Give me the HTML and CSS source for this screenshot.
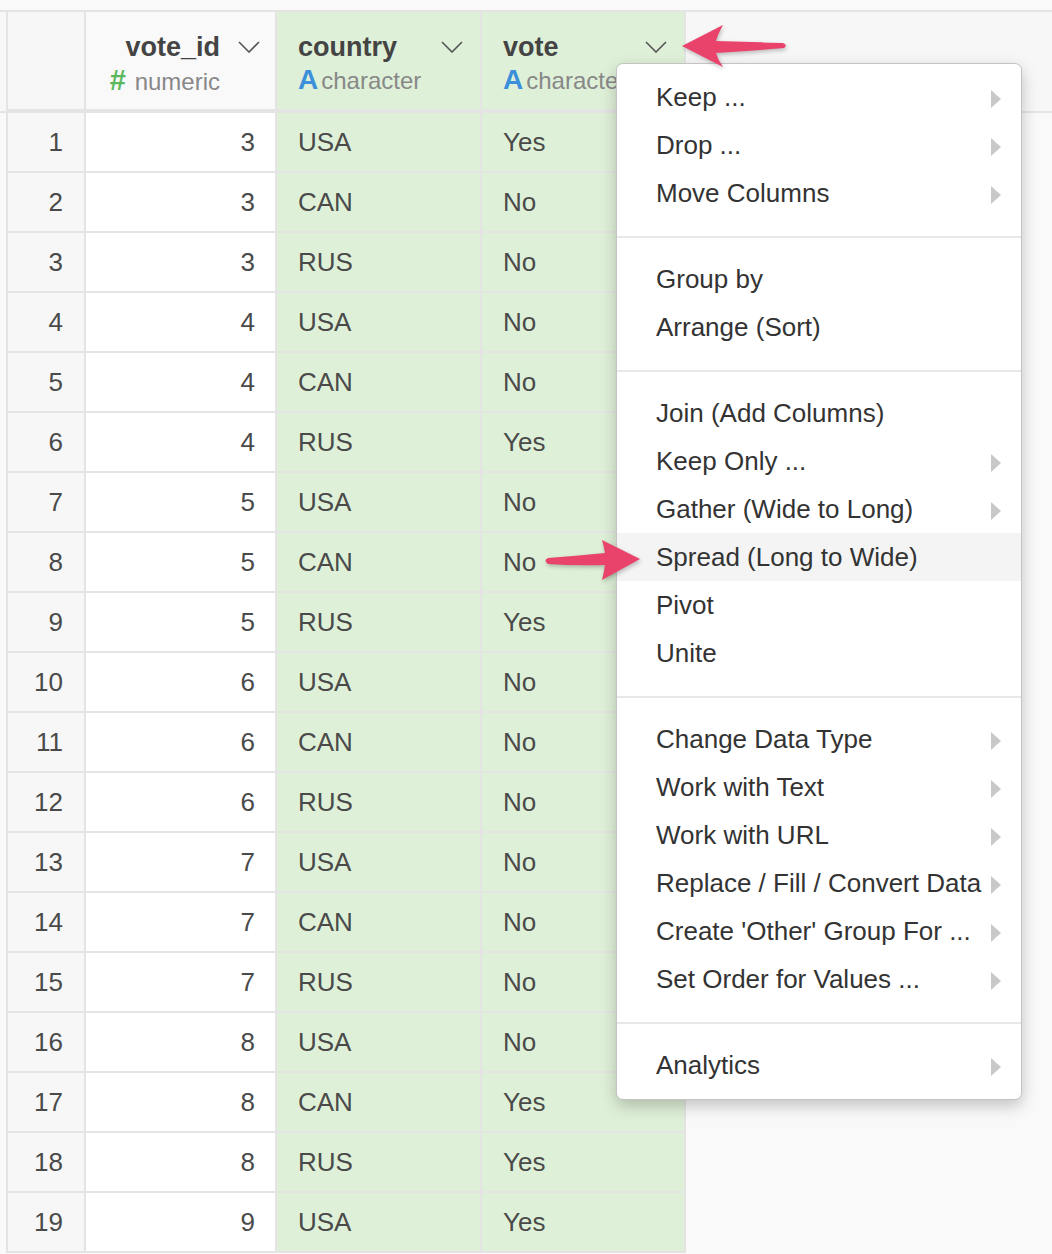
FILE: index.html
```html
<!DOCTYPE html>
<html>
<head>
<meta charset="utf-8">
<link rel="stylesheet" href="styles.css">
</head>
<body>
<div class="page">
  <div class="head">
    <div class="head-grid">
      <div class="hcell rn-head"></div>
      <div class="hcell num-head">
        <div class="hinfo right">
          <div class="hname">vote_id</div>
          <div class="htype"><span class="ico-num">#</span> numeric</div>
        </div>
        <svg class="chev" width="22" height="12" viewBox="0 0 22 12"><path d="M1 1 L11 11 L21 1" fill="none" stroke="#555" stroke-width="1.6"/></svg>
      </div>
      <div class="hcell chr-head">
        <div class="hinfo">
          <div class="hname">country</div>
          <div class="htype"><span class="ico-chr">A</span>character</div>
        </div>
        <svg class="chev" width="22" height="12" viewBox="0 0 22 12"><path d="M1 1 L11 11 L21 1" fill="none" stroke="#555" stroke-width="1.6"/></svg>
      </div>
      <div class="hcell chr-head">
        <div class="hinfo">
          <div class="hname">vote</div>
          <div class="htype"><span class="ico-chr">A</span>character</div>
        </div>
        <svg class="chev" width="22" height="12" viewBox="0 0 22 12"><path d="M1 1 L11 11 L21 1" fill="none" stroke="#555" stroke-width="1.6"/></svg>
      </div>
    </div>
    <div class="head-fill"></div>
  </div>

  <div class="body-grid">
    <div class="c rn">1</div><div class="c num">3</div><div class="c chr">USA</div><div class="c chr">Yes</div>
    <div class="c rn">2</div><div class="c num">3</div><div class="c chr">CAN</div><div class="c chr">No</div>
    <div class="c rn">3</div><div class="c num">3</div><div class="c chr">RUS</div><div class="c chr">No</div>
    <div class="c rn">4</div><div class="c num">4</div><div class="c chr">USA</div><div class="c chr">No</div>
    <div class="c rn">5</div><div class="c num">4</div><div class="c chr">CAN</div><div class="c chr">No</div>
    <div class="c rn">6</div><div class="c num">4</div><div class="c chr">RUS</div><div class="c chr">Yes</div>
    <div class="c rn">7</div><div class="c num">5</div><div class="c chr">USA</div><div class="c chr">No</div>
    <div class="c rn">8</div><div class="c num">5</div><div class="c chr">CAN</div><div class="c chr">No</div>
    <div class="c rn">9</div><div class="c num">5</div><div class="c chr">RUS</div><div class="c chr">Yes</div>
    <div class="c rn">10</div><div class="c num">6</div><div class="c chr">USA</div><div class="c chr">No</div>
    <div class="c rn">11</div><div class="c num">6</div><div class="c chr">CAN</div><div class="c chr">No</div>
    <div class="c rn">12</div><div class="c num">6</div><div class="c chr">RUS</div><div class="c chr">No</div>
    <div class="c rn">13</div><div class="c num">7</div><div class="c chr">USA</div><div class="c chr">No</div>
    <div class="c rn">14</div><div class="c num">7</div><div class="c chr">CAN</div><div class="c chr">No</div>
    <div class="c rn">15</div><div class="c num">7</div><div class="c chr">RUS</div><div class="c chr">No</div>
    <div class="c rn">16</div><div class="c num">8</div><div class="c chr">USA</div><div class="c chr">No</div>
    <div class="c rn">17</div><div class="c num">8</div><div class="c chr">CAN</div><div class="c chr">Yes</div>
    <div class="c rn">18</div><div class="c num">8</div><div class="c chr">RUS</div><div class="c chr">Yes</div>
    <div class="c rn">19</div><div class="c num">9</div><div class="c chr">USA</div><div class="c chr">Yes</div>
  </div>

  <div class="menu">
    <div class="grp">
      <div class="item"><span>Keep ...</span><i class="sub"></i></div>
      <div class="item"><span>Drop ...</span><i class="sub"></i></div>
      <div class="item"><span>Move Columns</span><i class="sub"></i></div>
    </div>
    <div class="sep"></div>
    <div class="grp">
      <div class="item"><span>Group by</span></div>
      <div class="item"><span>Arrange (Sort)</span></div>
    </div>
    <div class="sep"></div>
    <div class="grp">
      <div class="item"><span>Join (Add Columns)</span></div>
      <div class="item"><span>Keep Only ...</span><i class="sub"></i></div>
      <div class="item"><span>Gather (Wide to Long)</span><i class="sub"></i></div>
      <div class="item active"><span>Spread (Long to Wide)</span></div>
      <div class="item"><span>Pivot</span></div>
      <div class="item"><span>Unite</span></div>
    </div>
    <div class="sep"></div>
    <div class="grp">
      <div class="item"><span>Change Data Type</span><i class="sub"></i></div>
      <div class="item"><span>Work with Text</span><i class="sub"></i></div>
      <div class="item"><span>Work with URL</span><i class="sub"></i></div>
      <div class="item"><span>Replace / Fill / Convert Data</span><i class="sub"></i></div>
      <div class="item"><span>Create 'Other' Group For ...</span><i class="sub"></i></div>
      <div class="item"><span>Set Order for Values ...</span><i class="sub"></i></div>
    </div>
    <div class="sep"></div>
    <div class="grp">
      <div class="item"><span>Analytics</span><i class="sub"></i></div>
    </div>
  </div>

  <svg class="arrows" width="1052" height="1254" viewBox="0 0 1052 1254">
    <path d="M682,46 L723,25 Q718,34 716,41 Q750,42 783,43 Q788,45 784,48 Q750,51 716,53 Q718,60 723,67 Z" fill="#ea436b"/>
    <path d="M640,559 L602,540 Q604,547 605,553 Q575,556 548,558 Q543,560 548,564 Q575,566 605,565 Q604,572 602,580 Z" fill="#ea436b"/>
  </svg>
</div>
</body>
</html>
```

FILE: styles.css
```css
html, body {
  margin: 0;
  padding: 0;
  overflow: hidden;
  background: #f9f9f9;
}
.page {
  position: relative;
  width: 1052px;
  height: 1254px;
  padding-top: 10px;
  box-sizing: border-box;
  font-family: "Liberation Sans", Arial, sans-serif;
  color: #444;
}
.head {
  display: flex;
  border-top: 2px solid #e4e4e4;
  border-bottom: 2px solid #e4e4e4;
  background: #f7f7f7;
}
.head-grid {
  display: grid;
  grid-template-columns: 76px 189px 203px 202px;
  column-gap: 2px;
  background: #e4e4e4;
  padding: 0 2px 2px 2px;
  margin-left: 6px;
}
.head-fill {
  flex: 1;
  background: #f7f7f7;
}
.hcell {
  height: 97px;
  box-sizing: border-box;
  display: flex;
  align-items: flex-start;
}
.rn-head { background: #f7f7f7; }
.num-head {
  background: #f9f9f9;
  justify-content: flex-end;
  padding: 19px 15px 0 0;
}
.chr-head {
  background: #dff0d8;
  justify-content: space-between;
  padding: 19px 17px 0 21px;
}
.num-head .chev { margin-left: 18px; }
.hinfo { display: flex; flex-direction: column; }
.hinfo.right { align-items: flex-end; }
.hname {
  font-weight: bold;
  font-size: 27px;
  line-height: 32px;
  color: #444;
}
.htype {
  margin-top: 2px;
  font-size: 24px;
  line-height: 30px;
  color: #888;
  white-space: nowrap;
}
.ico-num {
  color: #5cb85c;
  font-weight: bold;
  font-size: 29px;
  margin-right: 2px;
}
.ico-chr {
  color: #3b8fdb;
  font-weight: bold;
  font-size: 28px;
  margin-right: 3px;
}
.chev {
  margin-top: 10px;
  flex: none;
}
.body-grid {
  display: grid;
  grid-template-columns: 76px 189px 203px 202px;
  gap: 2px;
  background: #e4e4e4;
  padding: 0 2px 2px 2px;
  margin-left: 6px;
  width: fit-content;
}
.c {
  height: 58px;
  line-height: 58px;
  font-size: 26px;
  color: #4a4a4a;
  box-sizing: border-box;
  white-space: nowrap;
}
.rn {
  background: #f7f7f7;
  text-align: right;
  padding-right: 21px;
}
.num {
  background: #fff;
  text-align: right;
  padding-right: 20px;
}
.chr {
  background: #dff0d8;
  padding-left: 21px;
}
.menu {
  position: absolute;
  left: 616px;
  top: 63px;
  width: 406px;
  box-sizing: border-box;
  background: #fff;
  border: 1px solid #c4c4c4;
  border-radius: 7px;
  box-shadow: 0 6px 16px rgba(0,0,0,0.22);
  padding: 9px 0 10px 0;
}
.item {
  height: 48px;
  line-height: 48px;
  font-size: 26px;
  color: #333;
  padding: 0 20px 0 39px;
  display: flex;
  justify-content: space-between;
  align-items: center;
  white-space: nowrap;
}
.item.active { background: #f4f4f4; }
.sub {
  width: 0;
  height: 0;
  margin-top: 4px;
  border-left: 10px solid #c8c8c8;
  border-top: 9px solid transparent;
  border-bottom: 9px solid transparent;
}
.sep {
  height: 2px;
  background: #e8e8e8;
  margin: 19px 0 17px 0;
}
.arrows {
  position: absolute;
  left: 0;
  top: 0;
  pointer-events: none;
  filter: drop-shadow(1px 2px 2px rgba(0,0,0,0.25));
}
```
